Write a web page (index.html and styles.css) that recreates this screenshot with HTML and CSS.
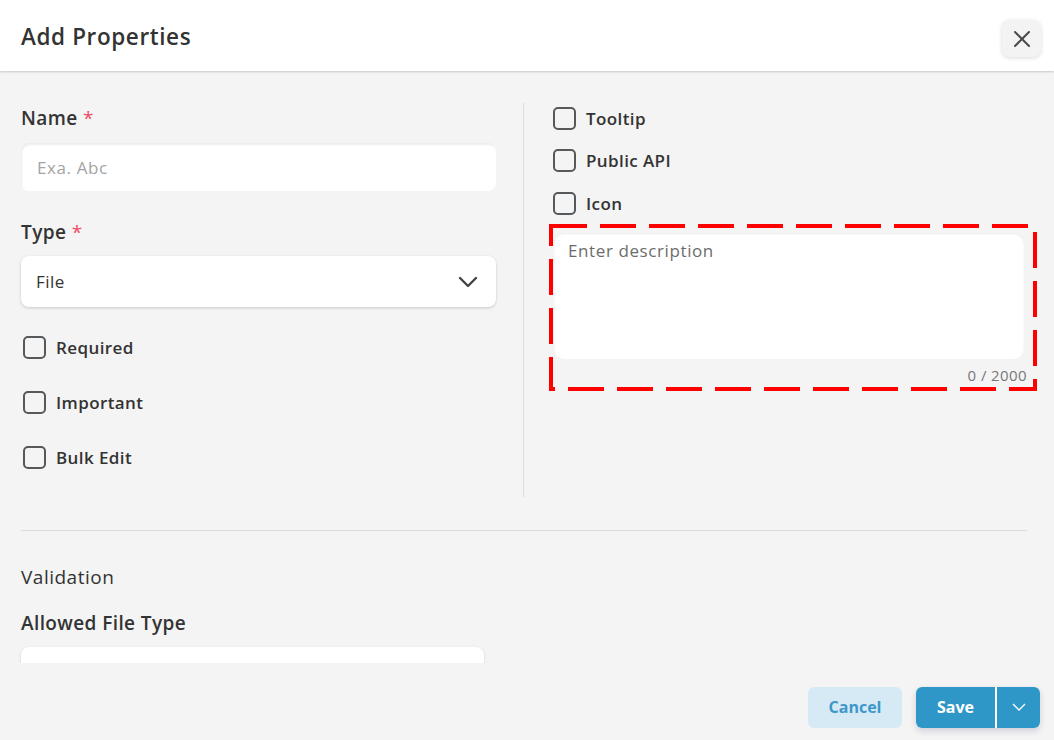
FILE: index.html
```html
<!DOCTYPE html>
<html>
<head>
<meta charset="utf-8">
<link rel="stylesheet" href="styles.css">
</head>
<body>
<div class="modal">
  <header class="header">
    <h1 class="title">Add Properties</h1>
    <button class="close" aria-label="Close">
      <svg width="18" height="18" viewBox="0 0 18 18"><path d="M2 2 L16 16 M16 2 L2 16" stroke="#4a4a4a" stroke-width="2" stroke-linecap="round" fill="none"/></svg>
    </button>
  </header>
  <main class="body">
    <div class="cols">
      <section class="col-left">
        <label class="label">Name <span class="req">*</span></label>
        <div class="input"><span class="placeholder">Exa. Abc</span></div>
        <label class="label label-type">Type <span class="req">*</span></label>
        <div class="select">
          <span>File</span>
          <svg width="20" height="12" viewBox="0 0 20 12"><path d="M2 2 L10 10 L18 2" stroke="#444" stroke-width="2.4" fill="none" stroke-linecap="round" stroke-linejoin="round"/></svg>
        </div>
        <div class="checks-left">
          <div class="check"><span class="box"></span><span>Required</span></div>
          <div class="check"><span class="box"></span><span>Important</span></div>
          <div class="check"><span class="box"></span><span>Bulk Edit</span></div>
        </div>
      </section>
      <section class="col-right">
        <div class="checks-right">
          <div class="check"><span class="box"></span><span>Tooltip</span></div>
          <div class="check"><span class="box"></span><span>Public API</span></div>
          <div class="check"><span class="box"></span><span>Icon</span></div>
        </div>
        <div class="desc-wrap">
          <svg class="dash" width="488" height="167" viewBox="0 0 488 167"><rect x="2" y="2" width="484" height="163" fill="none" stroke="#ff0000" stroke-width="4" stroke-dasharray="36 13"/></svg>
          <div class="textarea"><span class="placeholder dark">Enter description</span></div>
          <div class="counter">0 / 2000</div>
        </div>
      </section>
    </div>
    <hr class="divider">
    <h2 class="section-title">Validation</h2>
    <label class="label label-allowed">Allowed File Type</label>
    <div class="input input-short"></div>
  </main>
  <footer class="footer">
    <button class="btn btn-cancel">Cancel</button>
    <div class="btn-group">
      <button class="btn btn-save">Save</button>
      <button class="btn btn-drop" aria-label="More">
        <svg width="14" height="8" viewBox="0 0 14 8"><path d="M1 1 L7 7 L13 1" stroke="#fff" stroke-width="1.3" fill="none"/></svg>
      </button>
    </div>
  </footer>
</div>
</body>
</html>
```

FILE: styles.css
```css
* { box-sizing: border-box; }
html, body { margin: 0; padding: 0; }
body {
  background: #f4f4f4;
  font-family: "Open Sans", "Noto Sans", sans-serif;
  color: #333;
}
.modal {
  height: 740px;
  display: flex;
  flex-direction: column;
  overflow: hidden;
}
.header {
  height: 71px;
  flex: none;
  background: #fff;
  display: flex;
  align-items: center;
  justify-content: space-between;
  padding: 0 13px 0 21px;
  box-shadow: 0 1px 2px rgba(0,0,0,0.18);
  position: relative;
  z-index: 1;
}
.title {
  margin: 0;
  padding-top: 3px;
  font-size: 22.5px;
  line-height: 30px;
  font-weight: 600;
  color: #333;
  letter-spacing: 0.6px;
}
.close {
  width: 39px;
  height: 37px;
  border: none;
  border-radius: 8px;
  background: #f3f3f3;
  box-shadow: 0 1px 4px rgba(0,0,0,0.15);
  display: flex;
  align-items: center;
  justify-content: center;
  padding: 0;
  margin-top: 6px;
}
.body {
  flex: 1;
  overflow: hidden;
  padding: 35px 27px 0 21px;
}
.cols {
  display: grid;
  grid-template-columns: 502px 1fr;
}
.col-left {
  display: flex;
  flex-direction: column;
  padding-right: 27px;
  padding-bottom: 28px;
}
.label {
  font-size: 19px;
  font-weight: 600;
  line-height: 24px;
  color: #333;
  letter-spacing: 0.4px;
}
.req { color: #ee4d64; font-weight: 400; }
.input {
  margin-top: 13px;
  height: 48px;
  background: #fff;
  border-radius: 8px;
  box-shadow: inset 1px 2px 2px rgba(0,0,0,0.08);
  display: flex;
  align-items: center;
  padding: 0 16px;
}
.placeholder {
  font-size: 17px;
  color: #a3a3a3;
  letter-spacing: 0.6px;
}
.placeholder.dark { color: #6c6c6c; }
.label-type { margin-top: 29px; }
.select {
  margin-top: 12px;
  height: 51px;
  width: 475px;
  background: #fff;
  border-radius: 8px;
  box-shadow: 0 1px 3px rgba(0,0,0,0.18);
  display: flex;
  align-items: center;
  justify-content: space-between;
  padding: 0 18px 0 15px;
  font-size: 17px;
  color: #333;
  letter-spacing: 0.5px;
}
.checks-left {
  margin-top: 28px;
  display: flex;
  flex-direction: column;
  gap: 31px;
}
.check {
  display: flex;
  align-items: center;
  gap: 10px;
  height: 24px;
  font-size: 17px;
  font-weight: 600;
  color: #333;
  letter-spacing: 0.4px;
}
.box {
  width: 23px;
  height: 23px;
  border: 2px solid #56595c;
  border-radius: 5px;
  flex: none;
}
.checks-left .check { padding-left: 2px; }
.col-right {
  border-left: 1px solid #dcdcdc;
  padding-left: 29px;
  margin-top: -3px;
  padding-top: 3px;
  margin-right: -10px;
}
.checks-right {
  display: flex;
  flex-direction: column;
  gap: 18.5px;
}
.desc-wrap {
  position: relative;
  margin-top: 9px;
  margin-left: -4px;
  height: 167px;
  padding: 9px 13px 0 5px;
}
.dash {
  position: absolute;
  left: 0;
  top: 0;
}
.textarea {
  height: 126px;
  background: #fff;
  border-radius: 10px;
  box-shadow: inset 0 1px 2px rgba(0,0,0,0.08);
  padding: 6px 14px;
}
.counter {
  text-align: right;
  font-size: 15px;
  color: #777;
  margin-top: 6px;
  margin-right: -3px;
  letter-spacing: 0.4px;
}
.divider {
  border: none;
  border-top: 1px solid #dcdcdc;
  margin: 33px 0 0 0;
}
.section-title {
  margin: 34px 0 0 0;
  font-size: 19px;
  font-weight: 500;
  line-height: 24px;
  color: #333;
  letter-spacing: 0.5px;
}
.label-allowed { display: block; margin-top: 22px; }
.input-short {
  width: 463px;
  margin-top: 12px;
  box-shadow: 0 1px 3px rgba(0,0,0,0.15);
}
.footer {
  height: 77px;
  flex: none;
  display: flex;
  justify-content: flex-end;
  align-items: flex-start;
  padding: 24px 14px 0 0;
  gap: 14px;
}
.btn {
  border: none;
  height: 41px;
  font-family: inherit;
  font-size: 16px;
  font-weight: 700;
  padding: 0;
  padding-bottom: 1px;
}
.btn-cancel {
  width: 94px;
  border-radius: 6px;
  background: #d6eaf6;
  color: #3d97ca;
}
.btn-group {
  display: flex;
  gap: 2px;
  border-radius: 6px;
  box-shadow: 0 3px 6px rgba(60,60,120,0.2);
  overflow: hidden;
  background: #fff;
}
.btn-save {
  width: 79px;
  background: #2f96c8;
  color: #fff;
}
.btn-drop {
  width: 43px;
  background: #2f96c8;
  display: flex;
  align-items: center;
  justify-content: center;
}
```
